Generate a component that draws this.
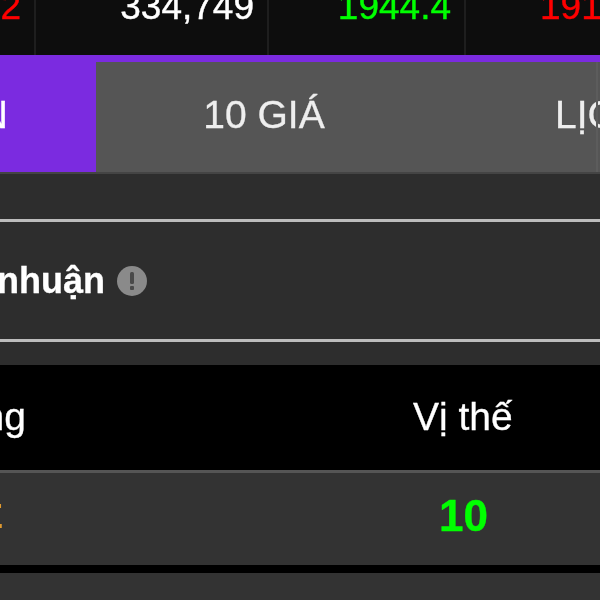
<div class="page">
  <div class="ticker">
    <div class="cell first"><span class="red">2</span></div>
    <div class="cell second"><span class="white">334,749</span></div>
    <div class="cell third"><span class="green">1944.4</span></div>
    <div class="cell fourth"><span class="red">191</span></div>
  </div>
  <div class="tabs">
    <div class="tab active"><span>N</span></div>
    <div class="tab middle"><span>10 GIÁ</span></div>
    <div class="tab last"><span>LỊCH SỬ</span></div>
    <div class="tab-end"></div>
  </div>
  <div class="gap"></div>
  <div class="profit">
    <span class="label">nhuận</span>
    <svg class="info" viewBox="0 0 30 30" width="30" height="30" aria-hidden="true">
      <circle cx="15" cy="15" r="15" fill="#8a8a8a" />
      <rect x="13" y="6" width="4" height="12" rx="1.5" fill="#4a4a4a" />
      <rect x="13" y="20" width="4" height="4" rx="1" fill="#4a4a4a" />
    </svg>
  </div>
  <div class="table">
    <div class="row head">
      <span class="name">ng</span>
      <span class="pos">Vị thế</span>
    </div>
    <div class="row body">
      <span class="name orange">E</span>
      <span class="pos strong">10</span>
    </div>
    <div class="row next"></div>
  </div>
</div>

<style>
  :global(body) {
    margin: 0;
    background: #2d2d2d;
  }
  .page {
    width: 600px;
    height: 600px;
    overflow: hidden;
    display: flex;
    flex-direction: column;
    background: #2d2d2d;
    font-family: "Liberation Sans", Arial, sans-serif;
    color: #fff;
    filter: blur(0.4px);
  }
  .ticker {
    flex: 0 0 55px;
    display: grid;
    grid-template-columns: 36px 233px 197px 134px;
    background: #0d0d0d;
    font-size: 37px;
    line-height: 36px;
    overflow: hidden;
    -webkit-text-stroke: 0.4px currentColor;
  }
  .cell {
    display: flex;
    justify-content: flex-end;
    align-items: flex-end;
    padding: 0 13px 30px 0;
    border-right: 2px solid #1e1e1e;
    box-sizing: border-box;
    height: 55px;
    white-space: nowrap;
  }
  .fourth {
    justify-content: flex-start;
    padding: 0 0 30px 74px;
    border-right: 0;
  }
  .red { color: #f00; }
  .white { color: #fff; }
  .green { color: #0f0; }
  .tabs {
    flex: 0 0 110px;
    display: grid;
    grid-template-columns: 96px 336px 164px 4px;
    border-top: 7px solid #7b2be0;
    background: #555;
    font-size: 39px;
    white-space: nowrap;
    border-bottom: 2px solid #444;
    -webkit-text-stroke: 0.3px currentColor;
  }
  .tab {
    display: flex;
    align-items: center;
    overflow: visible;
    padding-bottom: 4px;
    box-sizing: border-box;
  }
  .tab-end {
    border-left: 2px solid #5c5c5c;
  }
  .active {
    background: #7b2be0;
    justify-content: flex-end;
    padding-right: 88px;
  }
  .middle {
    justify-content: center;
    color: #eee;
  }
  .last {
    padding-left: 123px;
    color: #eee;
  }
  .gap {
    flex: 0 0 45px;
  }
  .profit {
    flex: 0 0 123px;
    box-sizing: border-box;
    display: flex;
    align-items: center;
    gap: 12px;
    border-top: 3px solid #bcbcbc;
    border-bottom: 3px solid #bcbcbc;
  }
  .label {
    font-size: 36px;
    font-weight: 700;
    margin-left: -3px;
    -webkit-text-stroke: 0.3px currentColor;
  }
  .table {
    margin-top: 23px;
    flex: 1;
    background: #000;
    display: flex;
    flex-direction: column;
  }
  .row {
    display: flex;
    align-items: center;
    justify-content: space-between;
    white-space: nowrap;
  }
  .head {
    flex: 0 0 105px;
    font-size: 39px;
    padding-bottom: 2px;
    box-sizing: border-box;
    -webkit-text-stroke: 0.3px currentColor;
  }
  .body {
    flex: 0 0 86px;
    background: #333;
    border-top: 3px solid #555;
    font-size: 44px;
    margin-bottom: 8px;
    padding-bottom: 6px;
    box-sizing: content-box;
  }
  .next {
    flex: 1;
    background: #333;
  }
  .name {
    flex: 0 0 26px;
    min-width: 0;
    display: flex;
    justify-content: flex-end;
  }
  .pos {
    flex: 0 0 187px;
    margin-left: auto;
    text-align: left;
  }
  .orange {
    color: #e09a30;
    flex: 0 0 3px;
    font-size: 35px;
    font-weight: 700;
  }
  .strong {
    color: #0f0;
    font-weight: 700;
    padding-left: 26px;
    box-sizing: border-box;
    -webkit-text-stroke: 0.4px currentColor;
  }
</style>
